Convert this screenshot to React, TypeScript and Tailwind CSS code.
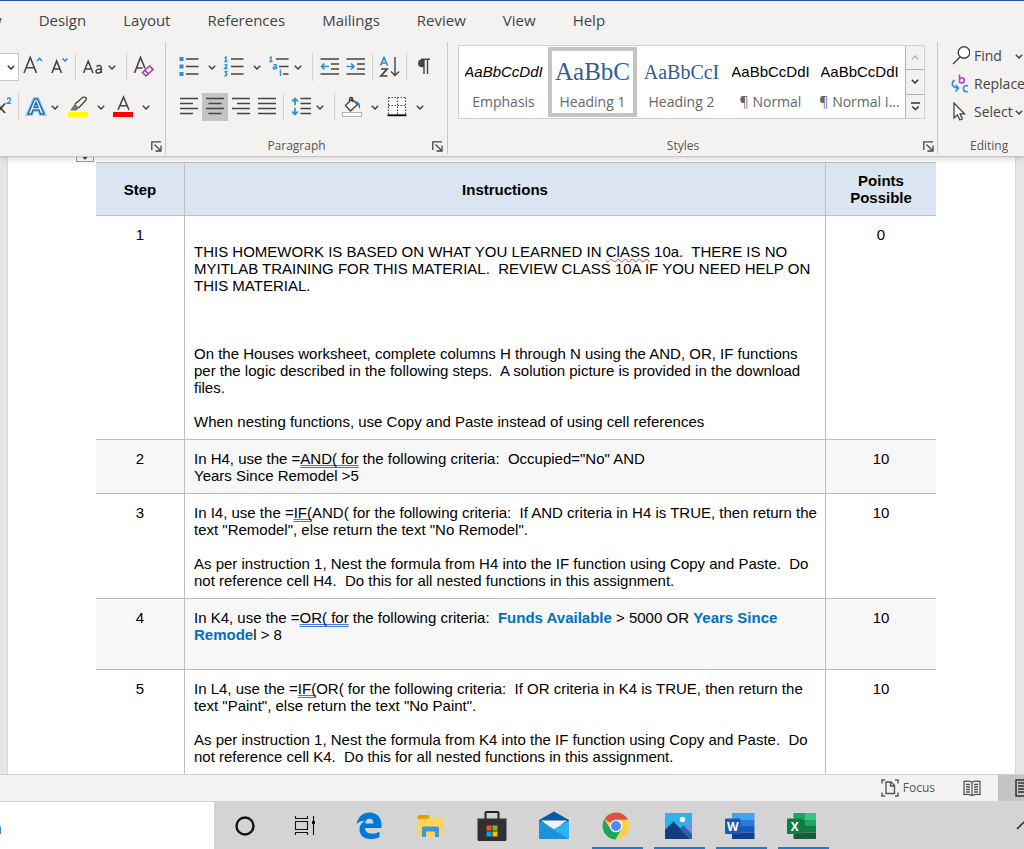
import type { ReactNode } from 'react';

const tabs = ['Design', 'Layout', 'References', 'Mailings', 'Review', 'View', 'Help'];

function Chevron({ wide = false, label }: { wide?: boolean; label: string }) {
  return (
    <button aria-label={label} className={`${wide ? 'w-[19px]' : 'w-3'} flex h-7 shrink-0 items-center justify-center`}>
      <svg width="8" height="5" viewBox="0 0 8 5" fill="none" stroke="#444" strokeWidth="1.5">
        <path d="M0.8 0.8 4 4 7.2 0.8" />
      </svg>
    </button>
  );
}

function Tool({ label, active = false, children }: { label: string; active?: boolean; children: ReactNode }) {
  return (
    <button
      aria-label={label}
      className={`${active ? 'bg-[#c6c4c2]' : ''} flex h-7 w-[26px] shrink-0 items-center justify-center`}
    >
      <svg width="22" height="24" viewBox="0 0 22 24" fill="none" stroke="#444" strokeWidth="1.4">
        {children}
      </svg>
    </button>
  );
}

function Divider() {
  return <div className="mr-1 ml-[3px] h-7 w-px shrink-0 bg-[#d2d0ce]" />;
}

function Launcher({ label }: { label: string }) {
  return (
    <button aria-label={label} className="flex size-4 items-center justify-center">
      <svg width="11" height="11" viewBox="0 0 11 11" fill="none" stroke="#444" strokeWidth="1.3">
        <path d="M0.8 9V0.8H10M3.5 3.5 9 9M10 4.5V10H4.5" />
      </svg>
    </button>
  );
}

// Name of the group at the bottom of a ribbon section
function GroupLabel({ name, launcher = true }: { name: string; launcher?: boolean }) {
  return (
    <div className="mt-auto flex h-4 items-center text-xs leading-4 text-[#555]">
      <span className="flex-1 pr-3 text-center">{name}</span>
      {launcher && <Launcher label={`${name || 'Font'} settings`} />}
    </div>
  );
}

function FontGroup() {
  return (
    <section className="flex w-[166px] shrink-0 flex-col border-r border-[#c8c6c4] pr-px">
      <div className="mt-[11px] flex items-center">
        <button aria-label="Font size" className="mr-px flex h-7 w-[19px] items-center justify-end border border-l-0 border-[#c8c6c4] bg-white pr-[3px]">
          <svg width="8" height="5" viewBox="0 0 8 5" fill="none" stroke="#333" strokeWidth="1.5">
            <path d="M0.8 0.8 4 4 7.2 0.8" />
          </svg>
        </button>
        <Tool label="Grow font">
          <path d="M2 18 8.2 2.500 14.500 18M4 12.800H12.300" strokeWidth="1.600" />
          <path d="M15 6 17.500 3.500 20 6" stroke="#2b8fcd" strokeWidth="1.600" />
        </Tool>
        <Tool label="Shrink font">
          <path d="M4 18 8.7 6 13.5 18M5.5 14H12" strokeWidth="1.600" />
          <path d="M14.500 3.500 17 6 19.500 3.500" stroke="#2b8fcd" strokeWidth="1.600" />
        </Tool>
        <Divider />
        <Tool label="Change case">
          <path d="M1.5 18 6.2 6 11 18M3 14H9.5M14.5 11.5Q19.3 9 19.3 13V18M19.3 14Q14 14 14 16.2T16 18Q19.3 18 19.3 15" strokeWidth="1.500" />
        </Tool>
        <Chevron label="Case options" />
        <div className="ml-[5px]">
          <Divider />
        </div>
        <Tool label="Clear formatting">
          <path d="M1.500 18 7.500 2.500 12 13.500M3.500 13H9.500" strokeWidth="1.600" />
          <path d="M9.5 17.5 16.5 11 20 14.5 13 21ZM12 15.5 15.3 18.8" stroke="#a03cab" strokeWidth="1.600" />
        </Tool>
      </div>
      <div className="mt-3 flex items-center">
        <button aria-label="Superscript" className="h-7 w-[15px]">
          <svg width="15" height="24" viewBox="0 0 15 24" fill="none" stroke="#444" strokeWidth="1.8">
            <path d="M-3 8.5 5 18M5 8.5-3 18" />
            <path d="M7.2 4.500Q7.500 3 9 3 11 3 10.500 5 10 6.500 7.200 8.300H11" stroke="#2b8fcd" strokeWidth="1.3" />
          </svg>
        </button>
        <Divider />
        <Tool label="Text effects">
          <path d="M3 19 9.5 4H12.5L19 19H15.5L14 15H8L6.5 19Z" stroke="#9ecbee" strokeWidth="4" />
          <path d="M3 19 9.5 4H12.5L19 19H15.5L14 15H8L6.5 19ZM9 12.5H13L11 7.5Z" fill="#fff" stroke="#1672bd" strokeWidth="1.6" />
        </Tool>
        <div className="mr-1">
          <Chevron label="Effect options" />
        </div>
        <Tool label="Highlight">
          <rect x="1" y="17" width="20" height="5" fill="#ff0" stroke="none" />
          <path d="M8 9 15.500 2.500Q18 1.500 19 3T18 6L11.500 13" />
          <path d="M8 8.500 12 13 9.500 15.500H3Z" fill="#777" stroke="none" />
        </Tool>
        <Chevron wide label="Highlight color" />
        <Tool label="Font color">
          <path d="M6 15 11.5 2 17 15M8 10.800H15" strokeWidth="1.500" />
          <rect x="1" y="17" width="20" height="5" fill="#f00" stroke="none" />
        </Tool>
        <Chevron wide label="Font color options" />
      </div>
      <GroupLabel name="" />
    </section>
  );
}

function ParagraphGroup() {
  return (
    <section className="flex w-[282px] shrink-0 flex-col border-r border-[#c8c6c4] pr-[2px] pl-[10px]">
      <div className="mt-[11px] flex items-center">
        <Tool label="Bullets">
          <path d="M1.5 2h4v4h-4zM1.5 9.5h4v4h-4zM1.5 17h4v4h-4z" fill="#2b8fcd" stroke="none" />
          <path d="M8 4H20.500M8 11.500H20.500M8 19H20.500" />
        </Tool>
        <Chevron wide label="Bullet options" />
        <Tool label="Numbering">
          <path d="M1.500 3 3 2V6.500M1.300 6.500H4.500M1.500 9.800Q4.500 8.800 3.800 11L1.600 13.500H4.500M1.500 16.500H3.800L2.700 18.300Q5 19 3.300 20.600L1.300 20.700" stroke="#2b8fcd" strokeWidth="1.4" />
          <path d="M8 4H20.500M8 11.500H20.500M8 19H20.500" />
        </Tool>
        <Chevron wide label="Numbering options" />
        <Tool label="Multilevel list">
          <path d="M1.500 3 3 2V6.500M1.300 6.500H4.500M5.500 10Q8.500 9 8.500 11V14M8.500 12Q5 11.500 5.200 13.200T8.500 13M11.500 16.500H12.500V21M12.500 14V15.200" stroke="#2b8fcd" strokeWidth="1.400" />
          <path d="M8 4H20.500M11 11.500H20.500M15 19H20.500" />
        </Tool>
        <Chevron label="List options" />
        <div className="ml-[5px]">
          <Divider />
        </div>
        <Tool label="Decrease indent">
          <path d="M1.500 4H20M12 9H20M12 14H20M1.500 19H20" />
          <path d="M10 11.500H2.500M5.500 8.500 2.500 11.500 5.500 14.500" stroke="#2b8fcd" strokeWidth="1.600" />
        </Tool>
        <Tool label="Increase indent">
          <path d="M1.500 4H20M12 9H20M12 14H20M1.500 19H20" />
          <path d="M1.500 11.500H9M6 8.500 9 11.500 6 14.500" stroke="#2b8fcd" strokeWidth="1.600" />
        </Tool>
        <Divider />
        <Tool label="Sort">
          <path d="M1.500 10.500 5 2.500 8.500 10.500M2.800 8H7.200" stroke="#2b8fcd" strokeWidth="1.700" />
          <path d="M2 14H8L2 21H8.500" strokeWidth="1.700" />
          <path d="M16 2V20.500M12 16.500 16 20.500 20 16.500" />
        </Tool>
        <Divider />
        <Tool label="Show marks">
          <path d="M16.500 4.200H9.500Q5 4.200 5 8.200T9.500 12.200H11V4.200Z" fill="#444" stroke="none" />
          <path d="M8 4.200H17M11 4.500V19M14.500 4.500V19" />
        </Tool>
      </div>
      <div className="mt-3 flex items-center">
        <Tool label="Align left">
          <path d="M2 3.500H20M2 8.500H15M2 13.500H20M2 18.500H15" />
        </Tool>
        <Tool label="Center" active>
          <path d="M2 3.500H20M4.500 8.500H17.500M2 13.500H20M4.500 18.500H17.500" />
        </Tool>
        <Tool label="Align right">
          <path d="M2 3.500H20M7 8.500H20M2 13.500H20M7 18.500H20" />
        </Tool>
        <Tool label="Justify">
          <path d="M2 3.500H20M2 8.500H20M2 13.500H20M2 18.500H20" />
        </Tool>
        <Divider />
        <Tool label="Line spacing">
          <path d="M5 3.500V10M2 6.500 5 3.500 8 6.500M5 13V19.500M2 16.500 5 19.500 8 16.500" stroke="#2b8fcd" strokeWidth="1.700" />
          <path d="M10.500 3.500H21M10.500 8.500H21M10.500 13.500H21M10.500 18.500H21" />
        </Tool>
        <Chevron label="Spacing options" />
        <div className="ml-[5px]">
          <Divider />
        </div>
        <Tool label="Shading">
          <path d="M4.500 10.500 11 4 16.500 9.500 9.500 16ZM8.500 6.500V4Q9 1.500 11.500 3V7" />
          <path d="M14 6Q20 6.500 19 14 17.500 13 17 9Z" fill="#1672bd" stroke="none" />
          <rect x="1.500" y="17.500" width="19" height="4" fill="#fff" stroke="#b5b3b1" strokeWidth="1" />
        </Tool>
        <Chevron wide label="Shading options" />
        <Tool label="Borders">
          <rect x="2" y="2" width="18" height="17" fill="#fff" stroke="none" />
          <path d="M2.500 2.500H20M2.500 10.500H20M2.500 2.500V19M11.500 2.500V19M19.500 2.500V19" strokeDasharray="1.500 1.500" strokeWidth="1.200" />
          <path d="M1.500 20.300H20.500" stroke="#000" strokeWidth="1.800" />
        </Tool>
        <Chevron wide label="Border options" />
      </div>
      <GroupLabel name="Paragraph" />
    </section>
  );
}

const styleItems = [
  { name: 'Emphasis', sample: 'AaBbCcDdI', look: 'font-["Liberation_Sans",sans-serif] text-[15px] italic text-black' },
  { name: 'Heading 1', sample: 'AaBbC', look: 'font-["Liberation_Serif",serif] text-[25px] text-[#2f5c94]' },
  { name: 'Heading 2', sample: 'AaBbCcI', look: 'font-["Liberation_Serif",serif] text-[20px] text-[#2f5c94]' },
  { name: '¶ Normal', sample: 'AaBbCcDdI', look: 'font-["Liberation_Sans",sans-serif] text-[15px] text-black' },
  { name: '¶ Normal I...', sample: 'AaBbCcDdI', look: 'font-["Liberation_Sans",sans-serif] text-[15px] text-black' },
];

function StylesGroup() {
  return (
    <section className="flex w-[490px] shrink-0 flex-col border-r border-[#c8c6c4] pr-px pl-[10px]">
      <div className="mt-[3px] flex h-[74px] w-[467px] border border-[#d2d0ce] bg-white">
        {styleItems.map((item) => (
          <button
            key={item.name}
            className={`${item.name === 'Heading 1' ? 'border-[#c6c4c2]' : 'border-transparent'} flex h-[70px] w-[89px] shrink-0 flex-col items-center self-center border-4`}
          >
            <span className={`${item.look} mt-[5px] flex h-8 w-[78px] shrink-0 items-center justify-center overflow-hidden leading-8 whitespace-nowrap`}>
              {item.sample}
            </span>
            <span className="mt-1 text-sm leading-5 whitespace-nowrap text-[#666]">{item.name}</span>
          </button>
        ))}
        <div className="ml-auto flex w-[19px] flex-col border-l border-[#b5b3b1]">
          <button aria-label="Scroll up" className="flex flex-1 items-center justify-center bg-[#f3f2f1]">
            <svg width="8" height="5" viewBox="0 0 8 5" fill="none" stroke="#b5b3b1" strokeWidth="1.300">
              <path d="M0.800 4.200 4 1 7.200 4.200" />
            </svg>
          </button>
          <button aria-label="Scroll down" className="flex flex-1 items-center justify-center border-y border-[#b5b3b1] bg-[#f3f2f1]">
            <svg width="8" height="5" viewBox="0 0 8 5" fill="none" stroke="#333" strokeWidth="1.500">
              <path d="M0.800 0.800 4 4 7.200 0.800" />
            </svg>
          </button>
          <button aria-label="More styles" className="flex flex-1 items-center justify-center bg-[#f3f2f1]">
            <svg width="9" height="9" viewBox="0 0 9 9" fill="none" stroke="#333" strokeWidth="1.500">
              <path d="M0 1H9M1.300 4.500 4.500 7.500 7.700 4.500" />
            </svg>
          </button>
        </div>
      </div>
      <GroupLabel name="Styles" />
    </section>
  );
}

function EditingGroup() {
  return (
    <section className="flex w-[110px] shrink-0 flex-col pl-3 text-sm text-[#444]">
      <div className="flex h-7 items-center">
        <button className="flex items-center gap-1">
          <svg width="20" height="20" viewBox="0 0 20 20" fill="none" stroke="#444" strokeWidth="1.400">
            <circle cx="14" cy="6.500" r="5.800" fill="#fff" />
            <path d="M10 11 3 18" />
          </svg>
          Find
        </button>
        <div className="ml-2">
          <Chevron wide label="Find options" />
        </div>
      </div>
      <button className="flex h-7 items-center gap-1">
        <svg width="20" height="20" viewBox="0 0 20 20" fill="none" strokeWidth="1.600">
          <path d="M9.500 0.500V9M9.500 5.500Q10 3.800 12 3.800 14.300 3.800 14.300 6.300T12 8.900 9.500 7" stroke="#b146c2" />
          <path d="M4.500 6Q1 8.500 3 12 4.500 14 8 14M5.500 11 8.500 14 5.500 17.500M18 12Q13.500 10.500 13.500 14.500T18 17.500" stroke="#2b8fcd" />
        </svg>
        Replace
      </button>
      <div className="flex h-7 items-center">
        <button className="flex items-center gap-1">
          <svg width="20" height="20" viewBox="0 0 20 20" fill="#fff" stroke="#444" strokeWidth="1.300">
            <path d="M4 1V16L7.500 12.800 9.800 18 12.300 17 10 11.800H14.500Z" />
          </svg>
          Select
        </button>
        <Chevron label="Select options" />
      </div>
      <div className="mt-auto pl-5 text-xs leading-4 text-[#555]">Editing</div>
    </section>
  );
}

function Ribbon() {
  return (
    <header className="relative z-10 shrink-0 overflow-hidden border-t border-b border-t-[#2b579a] border-b-[#c8c6c4] bg-[#f3f2f1] shadow-md">
      <nav className="flex h-[38px] items-center gap-[37px] text-[15px] whitespace-nowrap text-[#444]">
        <a href="#draw" className="-ml-[10px]">w</a>
        {tabs.map((tab) => (
          <a key={tab} href={`#${tab.toLowerCase()}`}>
            {tab}
          </a>
        ))}
      </nav>
      <div className="mt-[3px] mb-[2px] flex h-[112px]">
        <FontGroup />
        <ParagraphGroup />
        <StylesGroup />
        <EditingGroup />
      </div>
    </header>
  );
}

// Grammar mark: double blue line under the words
function Mark({ children }: { children: ReactNode }) {
  return (
    <span className="underline decoration-[#3f78e0] decoration-double decoration-1 underline-offset-1 [text-decoration-skip-ink:none]">
      {children}
    </span>
  );
}

const steps: { points: number; body: ReactNode }[] = [
  {
    points: 0,
    body: (
      <>
        <br />
        THIS HOMEWORK IS BASED ON WHAT YOU LEARNED IN{' '}
        <span className="underline decoration-red-500 decoration-wavy decoration-1 underline-offset-1">ClASS</span> 10a.&nbsp; THERE IS NO
        <br />
        MYITLAB TRAINING FOR THIS MATERIAL.&nbsp; REVIEW CLASS 10A IF YOU NEED HELP ON
        <br />
        THIS MATERIAL.
        <br />
        <br />
        <br />
        <br />
        On the Houses worksheet, complete columns H through N using the AND, OR, IF functions
        <br />
        per the logic described in the following steps.&nbsp; A solution picture is provided in the download
        <br />
        files.
        <br />
        <br />
        When nesting functions, use Copy and Paste instead of using cell references
      </>
    ),
  },
  {
    points: 10,
    body: (
      <>
        In H4, use the =<Mark>AND( for</Mark> the following criteria:&nbsp; Occupied="No" AND
        <br />
        Years Since Remodel &gt;5
      </>
    ),
  },
  {
    points: 10,
    body: (
      <>
        In I4, use the =<Mark>IF(</Mark>AND( for the following criteria:&nbsp; If AND criteria in H4 is TRUE, then return the
        <br />
        text "Remodel", else return the text "No Remodel".
        <br />
        <br />
        As per instruction 1, Nest the formula from H4 into the IF function using Copy and Paste.&nbsp; Do
        <br />
        not reference cell H4.&nbsp; Do this for all nested functions in this assignment.
      </>
    ),
  },
  {
    points: 10,
    body: (
      <>
        In K4, use the =<Mark>OR( for</Mark> the following criteria:&nbsp; <b className="text-[#0070c0]">Funds Available</b> &gt; 5000 OR{' '}
        <b className="text-[#0070c0]">Years Since</b>
        <br />
        <b className="text-[#0070c0]">Remode</b>l &gt; 8
        <br />
        <br />
      </>
    ),
  },
  {
    points: 10,
    body: (
      <>
        In L4, use the =<Mark>IF(</Mark>OR( for the following criteria:&nbsp; If OR criteria in K4 is TRUE, then return the
        <br />
        text "Paint", else return the text "No Paint".
        <br />
        <br />
        As per instruction 1, Nest the formula from K4 into the IF function using Copy and Paste.&nbsp; Do
        <br />
        not reference cell K4.&nbsp; Do this for all nested functions in this assignment.
      </>
    ),
  },
];

function Document() {
  return (
    <main className="min-h-0 flex-1 overflow-hidden bg-[#e6e6e6] pr-2 pl-[7px]">
      <div className="h-full border-x border-[#d8d8d8] bg-white pr-[79px] pl-[88px]">
        <div className="-ml-5 h-[5px] w-[18px] border border-t-0 border-[#999] bg-white">
          <svg width="16" height="4" viewBox="0 0 16 4" fill="#444">
            <path d="M5.500 0h5L8 3z" />
          </svg>
        </div>
        <table className="w-full table-fixed border-separate border-spacing-0 font-['Liberation_Sans',sans-serif] text-[15px] leading-[17px] whitespace-nowrap text-black">
          <thead>
            <tr className="h-[54px] bg-[#dbe5f1]">
              <th className="w-[89px] border-y border-r border-[#bfbfbf]">Step</th>
              <th className="border-y border-r border-[#bfbfbf]">Instructions</th>
              <th className="w-[110px] border-y border-[#bfbfbf]">
                Points
                <br />
                Possible
              </th>
            </tr>
          </thead>
          <tbody>
            {steps.map((step, i) => (
              <tr key={i} className="align-top even:bg-[#f7f7f7]">
                <td className="border-r border-b border-[#bfbfbf] pt-[10px] text-center">{i + 1}</td>
                <td className="border-r border-b border-[#bfbfbf] px-[9px] pt-[10px] pb-[9px]">{step.body}</td>
                <td className="border-b border-[#bfbfbf] pt-[10px] text-center">{step.points}</td>
              </tr>
            ))}
          </tbody>
        </table>
      </div>
    </main>
  );
}

function StatusBar() {
  return (
    <div className="flex h-[27px] shrink-0 items-center justify-end border-t border-[#d0d0d0] bg-[#f3f2f1] text-xs text-[#555]">
      <button className="flex items-center gap-1">
        <svg width="18" height="18" viewBox="0 0 18 18" fill="none" stroke="#555" strokeWidth="1.400">
          <path d="M1 4.500V1H4M14 1H17V4.500M1 13.500V17H4M14 17H17V13.500M5 3H10L13.500 6.500V14.500H5ZM9.500 3V7H13.500" />
        </svg>
        Focus
      </button>
      <button aria-label="Read mode" className="mr-[17px] ml-7">
        <svg width="18" height="17" viewBox="0 0 18 17" fill="none" stroke="#555" strokeWidth="1.300">
          <path d="M1 1.500Q6 0.500 9 2 12 0.500 17 1.500V14.500Q12 14 9 15.500 6 14 1 14.500ZM9 2V16M3 4.500H7M3 7H7M3 9.500H7M3 12H7M11 4.500H15M11 7H15M11 9.500H15M11 12H15" />
        </svg>
      </button>
      <button aria-label="Print layout" className="flex h-full w-[26px] items-center justify-end overflow-hidden bg-[#c6c4c2]">
        <svg width="9" height="18" viewBox="0 0 9 18" fill="none" stroke="#333" strokeWidth="1.500">
          <path d="M9 1H1V17H9M3 4H9M3 7H9M3 10H9M3 13H9" />
        </svg>
      </button>
    </div>
  );
}

function TaskButton({ label, running = false, children }: { label: string; running?: boolean; children: ReactNode }) {
  return (
    <button aria-label={label} className="flex h-12 w-[62px] shrink-0 flex-col items-center justify-between">
      <svg className="mt-[9px]" width="32" height="32" viewBox="0 0 32 32" fill="none">
        {children}
      </svg>
      <span className={`${running ? 'bg-[#1a7fd0]' : ''} h-[2px] w-[51px]`} />
    </button>
  );
}

function Taskbar() {
  return (
    <footer className="flex h-12 shrink-0 overflow-hidden bg-[#d4d4d4]">
      <input aria-label="Search" defaultValue="n" className="mt-px w-[214px] shrink-0 bg-white pt-1 text-base text-[#222] -indent-2 outline-none" />
      <TaskButton label="Cortana">
        <circle cx="16" cy="16" r="8.500" stroke="#111" strokeWidth="2.400" />
      </TaskButton>
      <TaskButton label="Task view">
        <g stroke="#111" strokeWidth="1.100">
          <path d="M4.500 6V8.500H16.500V6M4.500 25V22.500H16.500V25M4.500 11.500H16.500V19.500H4.500ZM22.500 6V25" />
          <path d="M21 11h3v3h-3z" fill="#111" stroke="none" />
        </g>
      </TaskButton>
      <TaskButton label="Edge">
        <path d="M3.500 14.500C5 6.500 10 2.500 16.500 2.500 24 2.500 28.500 8 28.500 14.500V18H12C12.300 22 15 23.700 19 23.700 22 23.700 24.500 23 26.500 21.800V27C24 28.500 21 29 17.500 29 10.500 29 6.500 25 6.500 19.500 6.500 15.500 8.500 12.500 12 10.700 8 10.500 5.500 12 3.500 14.500ZM12.200 13.500H20.500C20.500 10.500 19 8.800 16.500 8.800 14 8.800 12.500 10.500 12.200 13.500Z" fill="#0078d7" />
      </TaskButton>
      <TaskButton label="File Explorer">
        <path d="M2.500 6.500Q2.500 5 4 5H13L15 7H27.500Q29 7 29 8.500V25Q29 26.500 27.500 26.500H4Q2.500 26.500 2.500 25Z" fill="#ffd45e" />
        <path d="M2.500 9V6.500Q2.500 5 4 5H13.500L14.500 7 12.500 9Z" fill="#e0a000" />
        <path d="M7 27V18Q7 16.500 8.500 16.500H22.500Q24 16.500 24 18V27H20V21.500H11V27Z" fill="#3c96e0" />
      </TaskButton>
      <TaskButton label="Store">
        <path d="M8.500 11V3Q8.500 2 9.500 2H20.500Q21.500 2 21.500 3V11" stroke="#222" strokeWidth="2" />
        <path d="M0.500 8.500H29.500V29.500Q29.500 31 28 31H2Q0.500 31 0.500 29.500Z" fill="#303030" />
        <path d="M9.500 15.500h5v5h-5z" fill="#f25022" />
        <path d="M15.500 15.500h5v5h-5z" fill="#7fba00" />
        <path d="M9.500 21.500h5v5h-5z" fill="#00a4ef" />
        <path d="M15.500 21.500h5v5h-5z" fill="#ffb900" />
      </TaskButton>
      <TaskButton label="Mail">
        <path d="M0 10 15 1.500 30 10V15H0Z" fill="#0a58a8" />
        <path d="M2 10.500H28L15 20Z" fill="#f2f2f2" />
        <path d="M0 10.500 15 19 30 10.500V29H0Z" fill="#2eb5ef" />
        <path d="M0 10.500 30 29H0Z" fill="#1a93dd" />
      </TaskButton>
      <TaskButton label="Chrome" running>
        <circle cx="15" cy="16" r="13.500" fill="#fdd04a" />
        <path d="M15 16 3.300 9.300A13.500 13.500 0 0 1 27 9.800H15Z" fill="#dc5145" />
        <path d="M3.300 9.300A13.500 13.500 0 0 0 14.500 29.500L20.500 19 15 16 9.500 19Z" fill="#1da462" />
        <circle cx="15" cy="16" r="6.300" fill="#fff" />
        <circle cx="15" cy="16" r="5" fill="#4c8bf5" />
      </TaskButton>
      <TaskButton label="Photos" running>
        <path d="M2 3H29V29H2Z" fill="#2fb0ea" />
        <path d="M21 18 29 10V29H21Z" fill="#6f8fe0" />
        <path d="M2 20 10.500 11.500 27.500 29H2Z" fill="#123c7c" />
        <path d="M16.500 19 20.500 15.500 29 24V29H26.500Z" fill="#2a62ad" />
        <circle cx="19.500" cy="9.500" r="2.700" fill="#fff" />
      </TaskButton>
      <TaskButton label="Word" running>
        <path d="M7 3h22.500v6.500H7z" fill="#41a5ee" />
        <path d="M7 9.500h22.500V16H7z" fill="#2b7cd3" />
        <path d="M7 16h22.500v6.500H7z" fill="#185abd" />
        <path d="M7 22.500h22.500V29H7z" fill="#103f91" />
        <rect x="0" y="8.500" width="15.500" height="15.500" rx="1" fill="#1e56b8" />
        <text x="7.800" y="20.500" textAnchor="middle" fontFamily="Open Sans" fontWeight="700" fontSize="12" fill="#fff">W</text>
      </TaskButton>
      <TaskButton label="Excel" running>
        <path d="M6.500 3h11.500v6.500H6.500z" fill="#21a366" />
        <path d="M18 3h11v6.500H18z" fill="#33c481" />
        <path d="M6.500 9.500H18V16H6.500z" fill="#107c41" />
        <path d="M18 9.500h11V16H18z" fill="#21a366" />
        <path d="M6.500 16H29v6.500H6.500z" fill="#107c41" />
        <path d="M6.500 22.500H29V29H6.500z" fill="#185c37" />
        <rect x="0" y="8.500" width="15.500" height="15.500" rx="1" fill="#107c41" />
        <text x="7.800" y="20.500" textAnchor="middle" fontFamily="Open Sans" fontWeight="700" fontSize="12" fill="#fff">X</text>
      </TaskButton>
      <button aria-label="Show hidden icons" className="ml-auto">
        <svg width="8" height="10" viewBox="0 0 8 10" fill="none" stroke="#222" strokeWidth="1.400">
          <path d="M1 9 8 2" />
        </svg>
      </button>
    </footer>
  );
}

export default function App() {
  return (
    <div className="flex h-screen flex-col overflow-hidden font-['Open_Sans','Noto_Sans',sans-serif]">
      <Ribbon />
      <Document />
      <StatusBar />
      <Taskbar />
    </div>
  );
}
